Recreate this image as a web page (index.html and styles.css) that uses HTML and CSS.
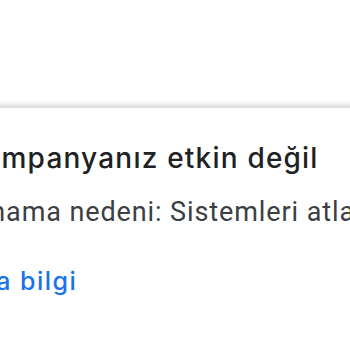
FILE: index.html
```html
<!DOCTYPE html>
<html lang="tr">
<head>
<meta charset="utf-8">
<link rel="stylesheet" href="styles.css">
</head>
<body>
<div class="page">
  <div class="top"></div>
  <div class="divider"></div>
  <div class="card">
    <h1 class="title">Kampanyanız etkin değil</h1>
    <p class="reason">Yayınlanmama nedeni: Sistemleri atlatma</p>
    <a class="more" href="#">Daha fazla bilgi</a>
  </div>
</div>
</body>
</html>
```
FILE: styles.css
```css
html, body {
  margin: 0;
  padding: 0;
  background: #ffffff;
}
.page {
  width: 350px;
  height: 350px;
  overflow: hidden;
}
.top {
  height: 101px;
}
.divider {
  height: 7px;
  background: linear-gradient(to bottom, #fcfcfc 0%, #f3f3f3 35%, #e3e3e3 70%, #dddddd 100%);
}
.card {
  display: flex;
  flex-direction: column;
  align-items: flex-start;
  padding-top: 33px;
}
.title {
  margin: 0 0 0 -36px;
  font-family: Inter, "Open Sans", sans-serif;
  font-weight: 500;
  font-size: 28px;
  letter-spacing: 1.2px;
  line-height: 34px;
  color: #202124;
  white-space: nowrap;
}
.reason {
  margin: 21px 0 0 -126px;
  font-family: Roboto, sans-serif;
  font-size: 27px;
  letter-spacing: 0.9px;
  line-height: 32px;
  color: #3c4043;
  white-space: nowrap;
}
.more {
  margin: 38px 0 0 -129px;
  font-family: Inter, "Open Sans", sans-serif;
  font-weight: 500;
  font-size: 25px;
  letter-spacing: 1.5px;
  line-height: 30px;
  color: #1a73e8;
  text-decoration: none;
  white-space: nowrap;
}
```
